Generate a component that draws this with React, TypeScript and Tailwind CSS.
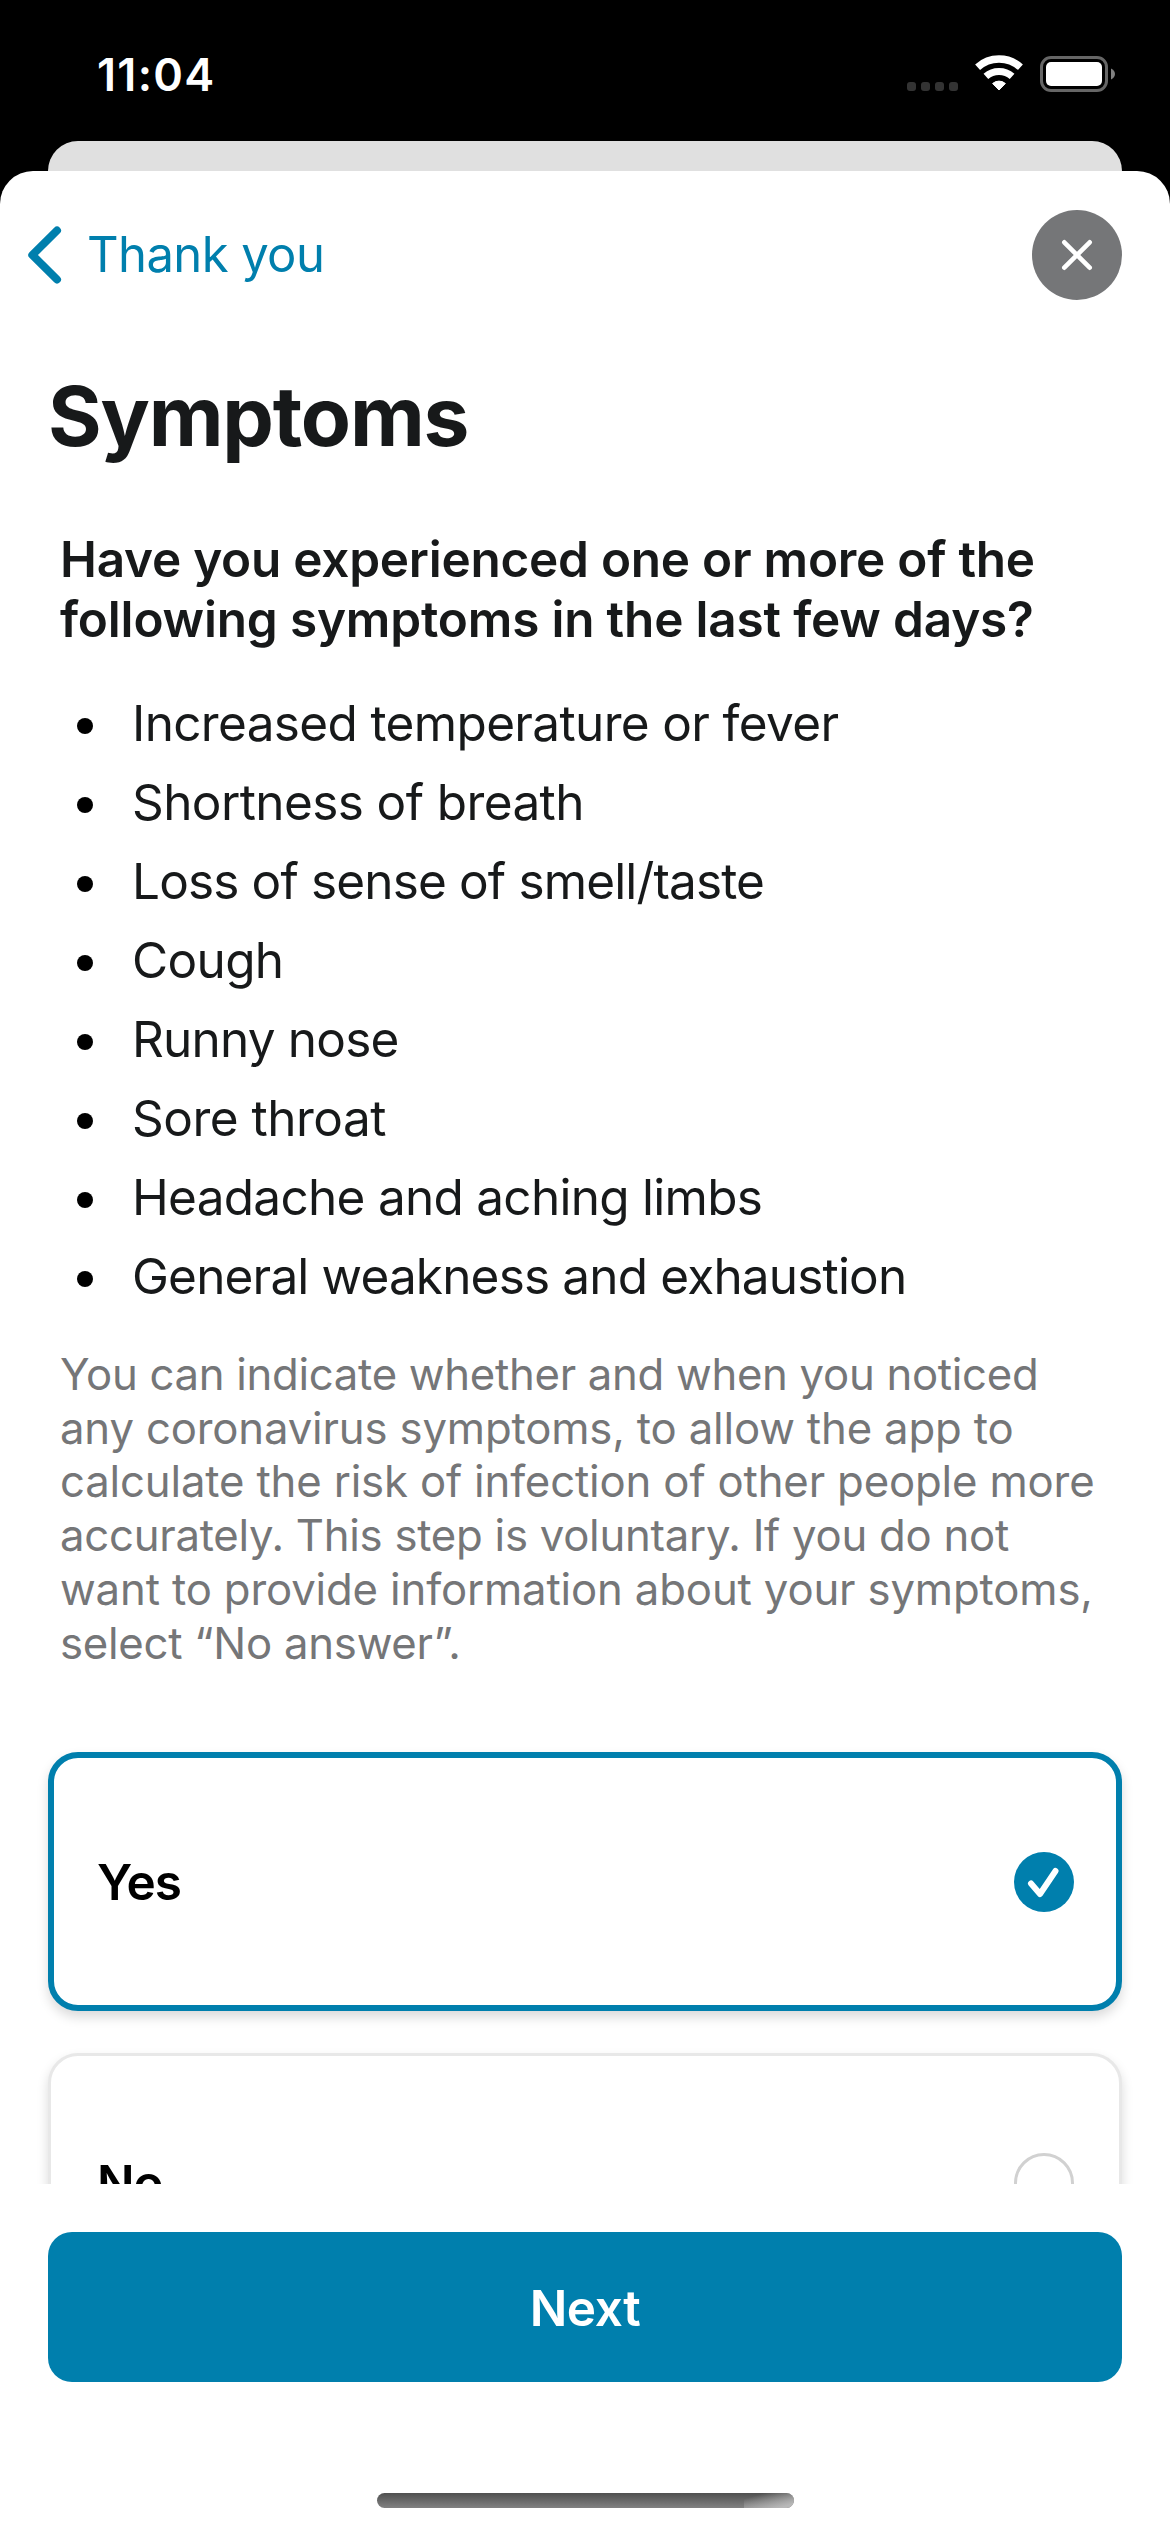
import type { ReactNode } from "react";

const symptoms = [
  { text: "Increased temperature or fever", tracking: "tracking-[-0.65px]" },
  { text: "Shortness of breath", tracking: "tracking-[-0.6px]" },
  { text: "Loss of sense of smell/taste", tracking: "tracking-[-0.85px]" },
  { text: "Cough", tracking: "tracking-[-0.65px]" },
  { text: "Runny nose", tracking: "tracking-[-0.8px]" },
  { text: "Sore throat", tracking: "tracking-[-0.5px]" },
  { text: "Headache and aching limbs", tracking: "tracking-[-0.72px]" },
  { text: "General weakness and exhaustion", tracking: "tracking-[-0.83px]" },
];

const noteLines = [
  { text: "You can indicate whether and when you noticed", tracking: "tracking-[-0.3px]" },
  { text: "any coronavirus symptoms, to allow the app to", tracking: "tracking-[-0.16px]" },
  { text: "calculate the risk of infection of other people more", tracking: "tracking-[-0.16px]" },
  { text: "accurately. This step is voluntary. If you do not", tracking: "tracking-[-0.26px]" },
  { text: "want to provide information about your symptoms,", tracking: "tracking-[-0.15px]" },
  { text: "select “No answer”.", tracking: "tracking-[-0.25px]" },
];

function StatusBar() {
  return (
    <div className="flex h-[141px] shrink-0 items-start justify-between pr-[55px] pl-[97px]">
      <span className="mt-[45px] text-[45px] leading-[60px] font-semibold tracking-[1.3px] text-white">
        11:04
      </span>
      <div className="mt-[55px] flex items-start">
        <div className="mt-[27px] flex gap-[5px]">
          {[0, 1, 2, 3].map((i) => (
            <span key={i} className="size-[9px] rounded-[3px] bg-[#333333]" />
          ))}
        </div>
        <svg className="ml-[17px] h-[36px] w-[48px]" viewBox="0 0 48 36" fill="none" stroke="#fff">
          <path d="M2.600 12.200A32 32 0 0 1 45.400 12.200" strokeWidth="7.400" />
          <path d="M10.900 21.400A19.600 19.600 0 0 1 37.100 21.400" strokeWidth="7" />
          <path d="M24 35 17.600 28.500A9.800 9.800 0 0 1 30.400 28.500z" fill="#fff" strokeWidth="1" strokeLinejoin="round" />
        </svg>
        <svg className="mt-[1px] ml-[17px] h-[36px] w-[75px]" viewBox="0 0 75 36">
          <rect x="1.500" y="1.500" width="65" height="33" rx="9.500" fill="none" stroke="#666" strokeWidth="3" />
          <rect x="6" y="6" width="56" height="24" rx="5" fill="#fff" />
          <path d="M71 12.500c2.400.9 4 3.100 4 5.500s-1.600 4.600-4 5.500z" fill="#808080" />
        </svg>
      </div>
    </div>
  );
}

function NavBar() {
  return (
    <div className="flex h-[168px] shrink-0 items-center justify-between pr-12 pl-7">
      <button className="flex items-center text-[#007fad]">
        <svg className="h-[58px] w-[34px]" viewBox="0 0 34 58" fill="none" stroke="currentColor" strokeWidth="8" strokeLinecap="round" strokeLinejoin="round">
          <path d="M29 4.500 4.300 29 29 53.500" />
        </svg>
        <span className="ml-[25px] text-[49px] leading-[60px] tracking-[-0.6px]">Thank you</span>
      </button>
      <button className="flex size-[90px] items-center justify-center rounded-full bg-[#757678]" aria-label="Close">
        <svg className="size-[32px]" viewBox="0 0 32 32" fill="none" stroke="#fff" strokeWidth="4.600" strokeLinecap="round">
          <path d="M3.300 3.300 28.700 28.700M28.700 3.300 3.300 28.700" />
        </svg>
      </button>
    </div>
  );
}

function Option({ label, card, children }: { label: string; card: string; children: ReactNode }) {
  return (
    <div className={`flex h-[259px] shrink-0 items-center justify-between rounded-[30px] bg-white shadow-[0_6px_12px_rgba(0,0,0,0.15)] ${card}`}>
      <span className="pl-px text-[49.5px] leading-[60px] font-semibold tracking-[-1px] text-black">{label}</span>
      {children}
    </div>
  );
}

export default function App() {
  return (
    <div className="flex h-[2532px] w-[1170px] flex-col overflow-hidden bg-black font-['Inter',sans-serif]">
      <StatusBar />
      <div className="mx-12 h-[30px] shrink-0 rounded-t-[30px] bg-[#e0e0e0]" />
      <div className="flex min-h-0 flex-1 flex-col rounded-t-[33px] bg-white">
        <NavBar />
        <main className="flex h-[1845px] shrink-0 flex-col overflow-hidden px-12 pt-[28px]">
          <h1 className="text-[82px] leading-[100px] font-bold tracking-[-1.2px] text-[#17191a]">Symptoms</h1>
          <section className="mt-[62px] px-3 text-[#17191a]">
            <h2 className="text-[49.5px] leading-[60px] font-semibold">
              <span className="block tracking-[-0.25px]">Have you experienced one or more of the</span>
              <span className="block tracking-[-0.18px]">following symptoms in the last few days?</span>
            </h2>
            <ul className="mt-[34px] pl-[17px]">
              {symptoms.map((s) => (
                <li key={s.text} className="flex h-[79px] items-center">
                  <span className="mt-[7px] size-[16px] rounded-full bg-black" />
                  <span className={`ml-[39px] text-[49.5px] leading-[60px] ${s.tracking}`}>{s.text}</span>
                </li>
              ))}
            </ul>
            <p className="mt-[33px] h-[322px] text-[43.7px] leading-[53.7px] whitespace-nowrap text-[#757678]">
              {noteLines.map((l) => (
                <span key={l.text} className={`block ${l.tracking}`}>
                  {l.text}
                </span>
              ))}
            </p>
          </section>
          <div className="mt-[82px] flex flex-col gap-[42px]">
            <Option label="Yes" card="border-[6px] border-[#007fad] px-[42px]">
              <svg className="size-[60px]" viewBox="0 0 60 60" fill="none">
                <circle cx="30" cy="30" r="30" fill="#007fad" />
                <path d="M17 31.500 26 42 41.500 19" stroke="#fff" strokeWidth="6" strokeLinecap="round" strokeLinejoin="round" />
              </svg>
            </Option>
            <Option label="No" card="border-[3px] border-[#e8e8e8] px-[45px]">
              <span className="size-[60px] rounded-full border-[3px] border-[#d1d1d1]" />
            </Option>
          </div>
        </main>
        <footer className="flex flex-1 flex-col items-center px-12 pt-12">
          <button className="h-[150px] w-full rounded-[24px] bg-[#007fad] pt-px text-[49.5px] leading-[60px] font-semibold tracking-[-0.4px] text-white">
            Next
          </button>
          <div className="mt-[111px] h-[15px] w-[417px] overflow-hidden rounded-full bg-linear-to-b from-[#505050] to-[#828282]">
            <div className="ml-auto h-full w-[50px] bg-linear-to-br from-transparent from-20% to-[#b8b8b8] to-85%" />
          </div>
        </footer>
      </div>
    </div>
  );
}
